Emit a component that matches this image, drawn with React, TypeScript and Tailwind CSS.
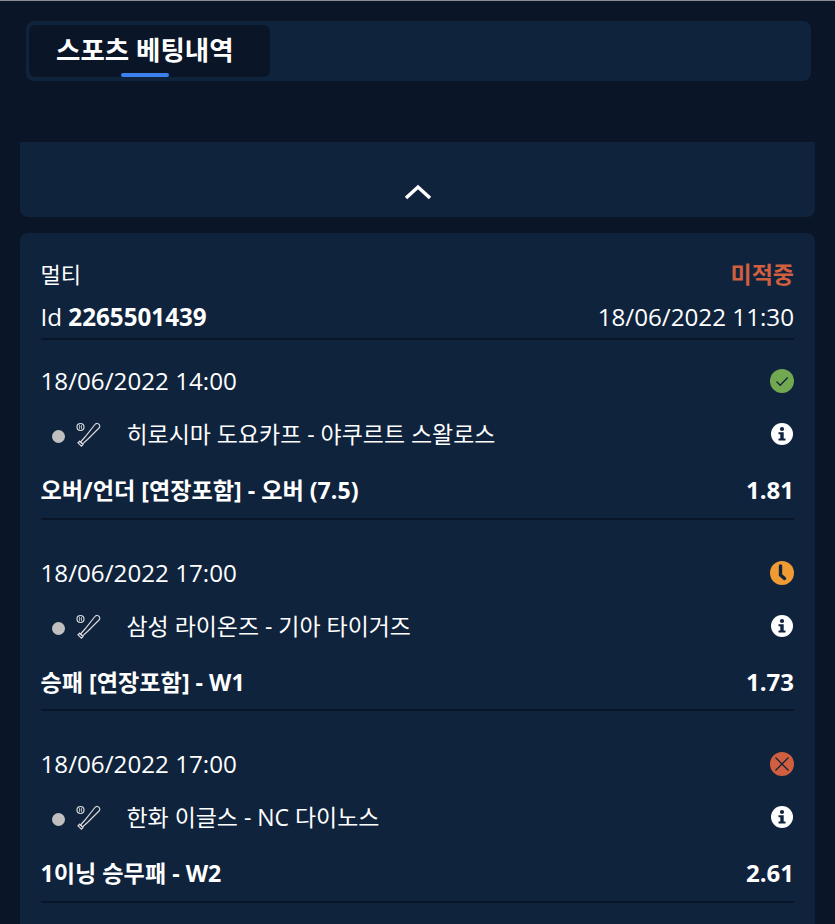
import React from "react";

const bets = [
  { date: "18/06/2022 14:00", status: "won", match: "히로시마 도요카프 - 야쿠르트 스왈로스", market: "오버/언더 [연장포함] - 오버 (7.5)", odd: "1.81" },
  { date: "18/06/2022 17:00", status: "open", match: "삼성 라이온즈 - 기아 타이거즈", market: "승패 [연장포함] - W1", odd: "1.73" },
  { date: "18/06/2022 17:00", status: "lost", match: "한화 이글스 - NC 다이노스", market: "1이닝 승무패 - W2", odd: "2.61" },
];

function StatusIcon({ status }: { status: string }) {
  if (status === "won") {
    return (
      <svg width="24" height="24" viewBox="0 0 24 24">
        <circle cx="12" cy="12" r="12" fill="#72a950" />
        <path d="M6.500 12.500l3.700 3.700 7.500-7.700" fill="none" stroke="#0f233d" strokeWidth="1.300" />
      </svg>
    );
  }
  if (status === "open") {
    return (
      <svg width="24" height="24" viewBox="0 0 24 24">
        <circle cx="12" cy="12" r="12" fill="#f09a33" />
        <path d="M10.500 5v9l4 3.500" fill="none" stroke="#0f233d" strokeWidth="3.400" strokeLinecap="round" strokeLinejoin="round" />
      </svg>
    );
  }
  return (
    <svg width="24" height="24" viewBox="0 0 24 24">
      <circle cx="12" cy="12" r="12" fill="#d05f3f" />
      <path d="M5.500 5.500l13 13M18.500 5.500l-13 13" fill="none" stroke="#0f233d" strokeWidth="1.300" />
    </svg>
  );
}

function InfoIcon() {
  return (
    <svg width="22" height="22" viewBox="0 0 22 22">
      <circle cx="11" cy="11" r="11" fill="#ffffff" />
      <circle cx="11" cy="6" r="2.100" fill="#0f233d" />
      <path d="M7.500 9.300h5.200v6.200h1.800v2h-7v-2h1.800v-4.200H7.500z" fill="#0f233d" />
    </svg>
  );
}

function BaseballIcon() {
  return (
    <svg width="26" height="26" viewBox="0 0 26 26" fill="none" stroke="#d8d8d8" strokeWidth="1.200">
      <circle cx="5.500" cy="5" r="3.500" />
      <path d="M4 2.500c.9 1.600.9 3.400 0 5M7 2.500c-.9 1.600-.9 3.400 0 5" strokeWidth="0.900" />
      <path d="M22.500 1.500c1.300.3 2.200 1.300 2.300 2.500 0 .8-.3 1.400-.8 2L12.500 17.500 7.500 22l-2-2 4.500-5L19.500 3c.8-1 1.900-1.700 3-1.500z" />
      <path d="M4.700 19.200l3.300 3.300-1.600 1.700-3.400-3.400z" />
    </svg>
  );
}

export default function App() {
  return (
    <div className="h-[924px] overflow-hidden border-t border-[#8a8d91] bg-[#0a1627] px-5 font-['Open_Sans','Noto_Sans_CJK_KR',sans-serif] text-white">
      <div className="ml-1.5 mr-1 mt-5 h-[60px] rounded-lg bg-[#0f233d] p-[3px] pt-1">
        <div className="relative flex h-[52px] w-[241px] items-center rounded-md bg-[#0a1627] pl-[27px]">
          <span className="-mt-[2px] text-[26.500px] font-bold leading-none">스포츠 베팅내역</span>
          <span className="absolute bottom-0 left-[92px] h-1 w-12 rounded-sm bg-[#3b82f0]" />
        </div>
      </div>

      <div className="mt-[61px] flex h-[75px] items-end justify-center rounded-b-lg bg-[#0f233d] pb-[17px]">
        <svg width="28" height="16" viewBox="0 0 28 16" fill="none" stroke="#ffffff" strokeWidth="3.500">
          <path d="M2 14L14 3l12 11" />
        </svg>
      </div>

      <div className="mt-4 h-[800px] rounded-t-lg bg-[#0f233d] pl-[20.500px] pr-[21px]">
        <div className="flex items-center justify-between pt-[26px] leading-[30px]">
          <span className="text-[22px]">멀티</span>
          <span className="text-[23px] font-bold text-[#d05f3f]">미적중</span>
        </div>
        <div className="mt-[13px] flex items-center justify-between text-[24.200px] leading-[30px]">
          <span>Id <span className="font-bold">2265501439</span></span>
          <span>18/06/2022 11:30</span>
        </div>
        <div className="mt-[6px] h-0.5 bg-[#0a1627]" />
        {bets.map((b) => (
          <div key={b.match} className="mb-3 h-[179.500px] border-b-2 border-[#0a1627]">
            <div className="flex h-[82px] items-center justify-between">
              <span className="text-[24.200px] leading-[30px]">{b.date}</span>
              <StatusIcon status={b.status} />
            </div>
            <div className="-mt-[5px] flex h-[34px] items-center justify-between">
              <div className="flex items-center">
                <span className="ml-[11px] mt-[5px] h-[13px] w-[13px] rounded-full bg-[#c0c0c0]" />
                <span className="ml-[10px] mt-[2px] flex w-[52px]"><BaseballIcon /></span>
                <span className="text-[22.950px] leading-[30px]">{b.match}</span>
              </div>
              <span className="mr-[1px] flex"><InfoIcon /></span>
            </div>
            <div className="mt-[24px] flex h-[30px] items-center justify-between font-bold leading-[30px]">
              <span className="text-[23.150px]">{b.market}</span>
              <span className="text-2xl">{b.odd}</span>
            </div>
          </div>
        ))}
      </div>
    </div>
  );
}
